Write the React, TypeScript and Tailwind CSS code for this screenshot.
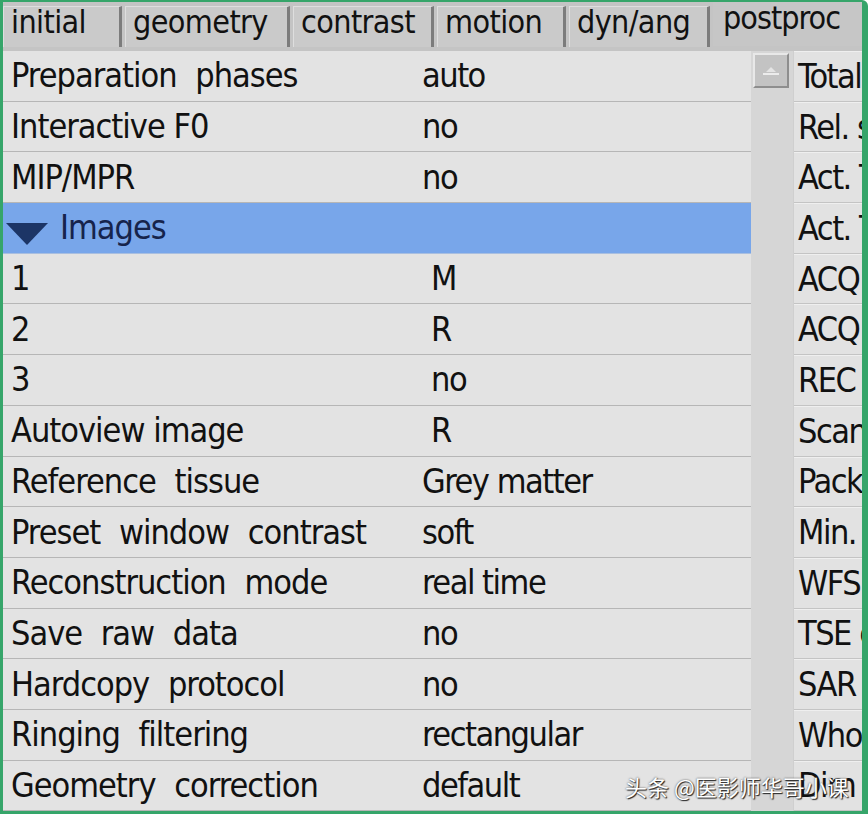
import React from 'react';

type Row = { label: string; value: string; shift?: boolean; group?: boolean; tight?: boolean };

const rows: Row[] = [
  { label: 'Preparation phases', value: 'auto' },
  { label: 'Interactive F0', value: 'no', tight: true },
  { label: 'MIP/MPR', value: 'no' },
  { label: 'Images', value: '', group: true },
  { label: '1', value: 'M', shift: true },
  { label: '2', value: 'R', shift: true },
  { label: '3', value: 'no', shift: true },
  { label: 'Autoview image', value: 'R', shift: true, tight: true },
  { label: 'Reference tissue', value: 'Grey matter' },
  { label: 'Preset window contrast', value: 'soft' },
  { label: 'Reconstruction mode', value: 'real time' },
  { label: 'Save raw data', value: 'no' },
  { label: 'Hardcopy protocol', value: 'no' },
  { label: 'Ringing filtering', value: 'rectangular' },
  { label: 'Geometry correction', value: 'default' },
];

const summary = [
  'Total scan duration',
  'Rel. signal level (%)',
  'Act. TR (ms)',
  'Act. TE (ms)',
  'ACQ matrix M x P',
  'ACQ voxel MPS (mm)',
  'REC voxel MPS (mm)',
  'Scan percentage (%)',
  'Packages',
  'Min. slice gap (mm)',
  'WFS (pix) / BW (Hz)',
  'TSE es / shot (ms)',
  'SAR / head',
  'Whole body / level',
  'Dim',
];

const tabs = [
  { name: 'initial', w: 'w-[119px]' },
  { name: 'geometry', w: 'w-[165px]' },
  { name: 'contrast', w: 'w-[141px]' },
  { name: 'motion', w: 'w-[129px]' },
  { name: 'dyn/ang', w: 'w-[141px]' },
];

export default function App() {
  return (
    <div
      className="relative w-[868px] h-[814px] overflow-hidden bg-[#c6c6c6] border-l-[3px] border-t-[2px] border-r-[6px] border-b-[3px] border-[#36a56a] rounded-tr-[6px] text-[#111]"
      style={{ fontFamily: '"DejaVu Sans Condensed", "DejaVu Sans", sans-serif' }}
    >
      {/* Tabs */}
      <div className="flex h-[49px] bg-[#c4c4c4]">
        {tabs.map((t) => (
          <div
            key={t.name}
            className={`${t.w} mr-[3px] mt-[4px] h-[41px] shrink-0 flex items-center pl-[7px] pb-[10px] bg-[#cacaca] border-t border-l border-[#dedede] border-r-[3px] border-r-[#7c7c7c] text-[32px] tracking-[-0.6px] leading-none`}
          >
            {t.name}
          </div>
        ))}
        <div className="flex-1 h-[44px] flex items-center pl-[10px] pb-[12px] bg-[#c6c6c6] text-[32px] tracking-[-1px] leading-none">
          postproc
        </div>
      </div>

      <div className="flex h-[760px]">
        {/* Parameter list */}
        <div className="w-[748px] shrink-0 bg-[#e3e3e3]">
          {rows.map((r) =>
            r.group ? (
              <div
                key={r.label}
                className="h-[50.7px] flex items-center bg-[#78a6ea] border-b border-[#a9bfe0] text-[34px] tracking-[-1px] text-[#16244c]"
              >
                <svg width="42" height="22" viewBox="0 0 42 22" className="ml-[3px] mt-[12px]">
                  <polygon points="0,0 42,0 21,22" fill="#1c3566" />
                </svg>
                <span className="ml-[12px]">{r.label}</span>
              </div>
            ) : (
              <div
                key={r.label}
                className="h-[50.7px] flex items-center border-b border-[#b6b6b6] text-[34px] whitespace-nowrap"
              >
                <span
                  className={`w-[419px] shrink-0 pl-[8px] tracking-[-1px] ${r.tight ? '[word-spacing:0px]' : '[word-spacing:10px]'}`}
                >
                  {r.label}
                </span>
                <span className={`tracking-[-1.5px] ${r.shift ? 'pl-[9px]' : ''}`}>{r.value}</span>
              </div>
            )
          )}
        </div>

        {/* Scrollbar */}
        <div className="w-[42px] shrink-0 bg-[#d6d6d6] pt-[2px] pl-[2px]">
          <div className="w-[36px] h-[35px] bg-[#c3c3c3] border-t-2 border-l-2 border-[#e8e8e8] border-r-2 border-b-2 border-r-[#8e8e8e] border-b-[#8e8e8e] flex items-center justify-center">
            <svg width="18" height="10" viewBox="0 0 18 10">
              <polygon points="4,6 9,1 14,6" fill="#e4e4e4" />
              <rect x="1" y="7" width="16" height="2" fill="#ececec" />
            </svg>
          </div>
        </div>

        {/* Summary column */}
        <div className="flex-1 overflow-hidden bg-[#cfcfcf]">
          {summary.map((s) => (
            <div
              key={s}
              className="h-[50.7px] ml-[1px] flex items-center bg-[#e2e2e2] border-t border-[#efefef] border-b border-b-[#c4c4c4] pl-[4px] text-[34px] tracking-[-1.5px] whitespace-nowrap"
            >
              {s}
            </div>
          ))}
        </div>
      </div>

      {/* Watermark */}
      <div
        className="absolute left-[622px] top-[768px] text-[22px] text-white whitespace-nowrap [text-shadow:1px_1px_1px_#222,0_0_2px_#444]"
        style={{ fontFamily: '"Noto Sans CJK SC", sans-serif' }}
      >
        头条 @医影师华哥小课
      </div>
    </div>
  );
}
